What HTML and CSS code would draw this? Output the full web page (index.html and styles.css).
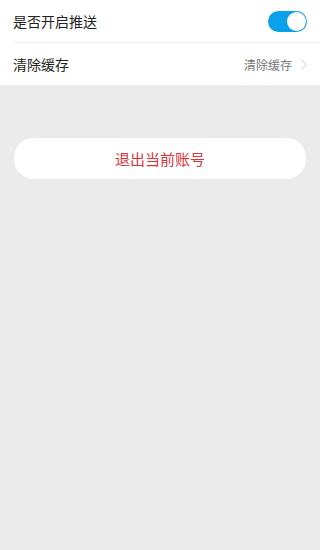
FILE: index.html
```html
<!DOCTYPE html>
<html lang="zh">
<head>
<meta charset="utf-8">
<link rel="stylesheet" href="styles.css">
</head>
<body>
<div class="group">
  <div class="row">
    <span class="label">是否开启推送</span>
    <span class="toggle"><span class="knob"></span></span>
  </div>
  <div class="divider"></div>
  <div class="row">
    <span class="label">清除缓存</span>
    <span class="extra">清除缓存
      <svg class="chev" width="6" height="11" viewBox="0 0 6 11"><path d="M0.5 0.5 L5 5.5 L0.5 10.5" fill="none" stroke="#c8c8c8" stroke-width="1"/></svg>
    </span>
  </div>
</div>
<div class="actions">
  <div class="logout">退出当前账号</div>
</div>
</body>
</html>
```

FILE: styles.css
```css
html, body {
  margin: 0;
  padding: 0;
  height: 100%;
}
body {
  background: #ebebeb;
  font-family: "Noto Sans CJK SC", "Noto Sans", sans-serif;
}
.group {
  background: #fff;
}
.row {
  height: 42px;
  display: flex;
  align-items: center;
  justify-content: space-between;
  padding: 0 13px 0 13px;
}
.label {
  font-size: 14px;
  color: #222;
}
.divider {
  height: 1px;
  background: #efefef;
  margin-left: 13px;
}
.toggle {
  width: 39px;
  height: 21px;
  border-radius: 11px;
  background: #0aa0ec;
  display: flex;
  align-items: center;
  justify-content: flex-end;
  box-sizing: border-box;
  padding: 1px;
  margin-right: 0;
}
.knob {
  width: 19px;
  height: 19px;
  border-radius: 50%;
  background: #fff;
}
.extra {
  display: flex;
  align-items: center;
  gap: 9px;
  font-size: 12px;
  color: #777;
}
.chev {
  display: block;
}
.actions {
  padding: 53px 14px 0 14px;
}
.logout {
  height: 41px;
  border-radius: 20px;
  background: #fff;
  display: flex;
  align-items: center;
  justify-content: center;
  color: #d8333a;
  font-size: 15px;
}
```
